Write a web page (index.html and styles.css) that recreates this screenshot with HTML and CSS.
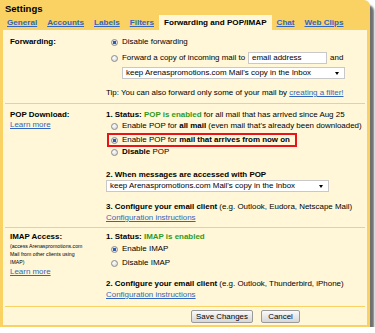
FILE: index.html
```html
<!DOCTYPE html>
<html lang="en">
<head>
    <meta charset="UTF-8">
    <title>Settings</title>
    <link rel="stylesheet" href="styles.css">
</head>
<body>
    <div class="frame">
        <div class="title">Settings</div>
        <div class="tabs">
            <a class="tab" href="#">General</a>
            <a class="tab" href="#">Accounts</a>
            <a class="tab" href="#">Labels</a>
            <a class="tab" href="#">Filters</a>
            <span class="tab active">Forwarding and POP/IMAP</span>
            <a class="tab" href="#">Chat</a>
            <a class="tab" href="#">Web Clips</a>
        </div>
        <div class="panel">
            <!-- forwarding -->
            <div class="row fwd">
                <div class="label"><b>Forwarding:</b></div>
                <div class="body">
                    <div class="opt"><span class="radio on"></span>Disable forwarding</div>
                    <div class="opt opt-input"><span class="radio"></span>Forward a copy of incoming mail to
                        <span class="input">email address</span> and</div>
                    <div class="select sel-fwd">keep Arenaspromotions.com Mail's copy in the Inbox</div>
                    <div class="tip">Tip: You can also forward only some of your mail by <a href="#">creating a filter!</a></div>
                </div>
            </div>

            <!-- pop -->
            <div class="row pop">
                <div class="label">
                    <b>POP Download:</b><br>
                    <a href="#">Learn more</a>
                </div>
                <div class="body">
                    <div class="line"><b>1. Status: <span class="ok">POP is enabled</span></b> for all mail that has arrived since Aug 25</div>
                    <div class="opt first"><span class="radio"></span>Enable POP for&nbsp;<b>all mail</b>&nbsp;(even mail that's already been downloaded)</div>
                    <div class="opt boxed"><span class="radio on"></span>Enable POP for&nbsp;<b>mail that arrives from now on</b></div>
                    <div class="opt"><span class="radio"></span><b>Disable</b>&nbsp;POP</div>
                    <div class="line step2"><b>2. When messages are accessed with POP</b></div>
                    <div class="select">keep Arenaspromotions.com Mail's copy in the Inbox</div>
                    <div class="line step3"><b>3. Configure your email client</b> (e.g. Outlook, Eudora, Netscape Mail)</div>
                    <div class="line cfg"><a href="#">Configuration instructions</a></div>
                </div>
            </div>

            <!-- imap -->
            <div class="row imap">
                <div class="label">
                    <b>IMAP Access:</b>
                    <div class="small">(access Arenaspromotions.com Mail from other clients using IMAP)</div>
                    <a class="learn" href="#">Learn more</a>
                </div>
                <div class="body">
                    <div class="line"><b>1. Status: <span class="ok">IMAP is enabled</span></b></div>
                    <div class="opt en"><span class="radio on"></span>Enable IMAP</div>
                    <div class="opt dis"><span class="radio"></span>Disable IMAP</div>
                    <div class="line step2i"><b>2. Configure your email client</b> (e.g. Outlook, Thunderbird, iPhone)</div>
                    <div class="line cfg"><a href="#">Configuration instructions</a></div>
                </div>
            </div>

            <div class="actions">
                <button class="btn save">Save Changes</button>
                <button class="btn cancel">Cancel</button>
            </div>
        </div>
    </div>
</body>
</html>
```

FILE: styles.css
```css
body {
    margin: 0;
    background-color: #fff;
    font-family: "Liberation Sans", Arial, sans-serif;
    font-size: 7.95px;
    line-height: 10px;
    color: #000;
}

a {
    color: #3366bb;
}

.frame {
    width: 370px;
    height: 327px;
    background-color: #fad163;
    border-top-right-radius: 6px;
    box-shadow: 4px 5px 2px #707070;
    display: flex;
    flex-direction: column;
}

.title {
    font-size: 9.5px;
    font-weight: bold;
    line-height: 11px;
    height: 12px;
    padding: 3px 0 0 5px;
}

.tabs {
    display: flex;
    height: 15px;
    padding-left: 2px;
}

.tab {
    padding: 0 5px;
    font-size: 8.1px;
    font-weight: bold;
    line-height: 15px;
    color: #3366bb;
}

.tab.active {
    background-color: #fff7d7;
    color: #000;
}

.panel {
    flex: 1;
    background-color: #fff7d7;
    margin: 0 3px 2px 3px;
}

.row {
    display: grid;
    grid-template-columns: 101px 1fr;
    margin: 0 2px;
    border-bottom: 1px solid #fad163;
}

.label {
    padding-left: 5px;
}

.fwd { padding: 7px 0 5px; }
.pop { padding: 6px 0 4px; }
.imap { padding: 4px 0 6px; }

.line {
    height: 10px;
    white-space: nowrap;
}

.opt {
    display: flex;
    align-items: center;
    height: 10px;
    padding-left: 5px;
    white-space: nowrap;
}

.radio {
    box-sizing: border-box;
    width: 7px;
    height: 7px;
    margin-right: 4px;
    border: 1px solid #8c8c8c;
    border-radius: 50%;
    background: radial-gradient(circle at 40% 35%, #fff, #cfcfcf);
    flex-shrink: 0;
}

.radio.on {
    background: radial-gradient(circle, #2c5cb0 0 1.4px, #e9e9e9 2px, #c6c6c6);
}

.opt-input {
    height: 14px;
    margin-top: 4px;
}

.input {
    display: inline-block;
    box-sizing: border-box;
    width: 79px;
    height: 12px;
    line-height: 10px;
    margin: 0 3px;
    padding-left: 3px;
    background-color: #fff;
    border: 1px solid #c8c8c8;
}

.select {
    position: relative;
    box-sizing: border-box;
    width: 223px;
    height: 12px;
    line-height: 10px;
    padding-left: 3px;
    background-color: #fff;
    border: 1px solid #c8c8c8;
    white-space: nowrap;
}

.select::after {
    content: "";
    position: absolute;
    right: 5px;
    top: 4px;
    border-left: 2.5px solid transparent;
    border-right: 2.5px solid transparent;
    border-top: 3px solid #000;
}

.sel-fwd {
    margin: 2px 0 0 16px;
}

.tip {
    margin-top: 9px;
    white-space: nowrap;
}

.ok {
    color: #2f9a23;
}

.pop .first { margin-top: 1px; }

.boxed {
    box-sizing: border-box;
    width: 190px;
    height: 14px;
    margin: 2px 0 0 1px;
    padding-left: 2px;
    border: 2px solid #e8141a;
}

.step2 { margin-top: 13px; }
.step3 { margin-top: 10px; }
.cfg { margin-top: 1px; }

.small {
    font-size: 5.2px;
    line-height: 8px;
    width: 80px;
}

.learn {
    display: block;
    margin-top: 1px;
}

.imap .en { margin-top: 2px; }
.imap .dis { margin-top: 4px; }
.step2i { margin-top: 11px; }

.actions {
    display: flex;
    gap: 8px;
    padding: 3px 0 0 188px;
}

.btn {
    box-sizing: border-box;
    height: 13px;
    padding: 0;
    font-family: "Liberation Sans", Arial, sans-serif;
    font-size: 7.9px;
    color: #000;
    background: linear-gradient(#fafafa, #d6d6d6);
    border: 1px solid #9a9a9a;
    border-radius: 2px;
}

.save { width: 62px; }
.cancel { width: 39px; }
```
